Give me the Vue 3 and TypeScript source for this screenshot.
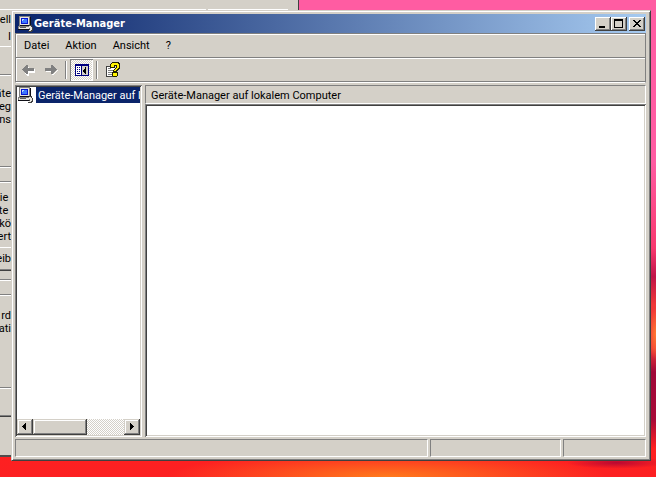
<script setup lang="ts">
import { ref } from 'vue'

interface Fragment {
  kind: 'text' | 'groove' | 'light' | 'dark'
  gap: number
  text?: string
}

const menus: string[] = ['Datei', 'Aktion', 'Ansicht', '?']
const treeVisible = ref(true)

const fragments: Fragment[] = [
  { kind: 'text', gap: 3, text: 'tell' },
  { kind: 'text', gap: 4, text: 'I' },
  { kind: 'light', gap: 3 },
  { kind: 'groove', gap: 27 },
  { kind: 'text', gap: 11, text: 'äte' },
  { kind: 'text', gap: 0, text: 'reg' },
  { kind: 'text', gap: 0, text: 'ns' },
  { kind: 'groove', gap: 40 },
  { kind: 'groove', gap: 13 },
  { kind: 'text', gap: 8, text: 'ie ' },
  { kind: 'text', gap: 0, text: 'te ' },
  { kind: 'text', gap: 0, text: 'kö' },
  { kind: 'text', gap: 0, text: 'ert' },
  { kind: 'light', gap: 4 },
  { kind: 'text', gap: 4, text: 'eib' },
  { kind: 'dark', gap: 4 },
  { kind: 'groove', gap: 8 },
  { kind: 'groove', gap: 13 },
  { kind: 'text', gap: 13, text: 'rd' },
  { kind: 'text', gap: 0, text: 'ati' },
  { kind: 'groove', gap: 52 },
  { kind: 'dark', gap: 26 },
]
</script>

<template>
  <div class="desktop">
    <section class="dialog">
      <div class="tabs"><span></span><span></span></div>
      <div class="edge">
        <div
          v-for="(item, i) in fragments"
          :key="i"
          :class="item.kind"
          :style="{ marginTop: item.gap + 'px' }"
        >{{ item.text }}</div>
      </div>
    </section>

    <main class="window">
      <header class="titlebar">
        <svg class="pc" viewBox="0 0 16 16" shape-rendering="crispEdges" aria-hidden="true">
          <g id="pc-shape">
            <path fill="#808080" d="M2 0h11v10H2zM1 10h12v4H1z" />
            <path fill="#e8e6e0" d="M3 1h9v8H3zM2 11h10v2H2z" />
            <path fill="#0818d0" d="M4 2h7v6H4z" />
            <path fill="#3c78ff" d="M5 3h5v4H5z" />
            <path fill="#b8d8ff" d="M5 3h2v1H5zM5 4h1v1H5z" />
            <path fill="#101018" d="M13 1h1v9h-1zM3 9h10v1H3zM1 13h12v1H1z" />
            <path fill="#606060" d="M3 11h6v1H3z" />
            <path fill="#404040" d="M12 9h3v2h1v4h-1v1h-4v-1h1v-2h1v-2h-1z" />
            <path fill="#e8e6e0" d="M12 10h2v1h1v3h-1v1h-2v-1h1v-2h-1z" />
          </g>
        </svg>
        <h1>Geräte-Manager</h1>
        <div class="captions">
          <button type="button" aria-label="Minimieren">
            <svg viewBox="0 0 12 10" shape-rendering="crispEdges"><path d="M2 7h6v2H2z" /></svg>
          </button>
          <button type="button" aria-label="Maximieren">
            <svg viewBox="0 0 12 10" shape-rendering="crispEdges"><path fill-rule="evenodd" d="M1 0h9v9H1zM2 2v6h7V2z" /></svg>
          </button>
          <button type="button" class="close" aria-label="Schließen">
            <svg viewBox="0 0 12 10" shape-rendering="crispEdges"><path d="M2 1h2v1h1v1h2V2h1V1h2v1H9v1H8v1H7v1h1v1h1v1h1v1H8V7H7V6H5v1H4v1H2V7h1V6h1V5h1V4H4V3H3V2H2z" /></svg>
          </button>
        </div>
      </header>

      <div class="bars">
        <nav class="menubar">
          <button v-for="m in menus" :key="m" type="button">{{ m }}</button>
        </nav>
        <div class="toolbar">
          <button type="button" class="tool" disabled aria-label="Zurück">
            <svg viewBox="0 0 16 16" shape-rendering="crispEdges">
              <path fill="#fff" d="M7 5h2v2h6v4H9v3H7v-1H6v-1H5v-1h3V7H7z" />
              <path fill="#808080" d="M2 7h1V6h1V5h1V4h1V3h2v3h6v3H8v3H6v-1H5v-1H4V9H3V8H2z" />
            </svg>
          </button>
          <button type="button" class="tool" disabled aria-label="Vorwärts">
            <svg viewBox="0 0 16 16" shape-rendering="crispEdges">
              <path fill="#fff" d="M3 9h6v3h2v-1h1v-1h1V9h1V8h1v1h-1v1h-1v1h-1v1h-1v1H9v-3H3z" />
              <path fill="#808080" d="M14 7h-1V6h-1V5h-1V4h-1V3H8v3H2v3h6v3h2v-1h1v-1h1V9h1V8h1z" />
            </svg>
          </button>
          <span class="divider"></span>
          <button
            type="button"
            class="tool"
            :class="{ pressed: treeVisible }"
            :aria-pressed="treeVisible"
            aria-label="Konsolenstruktur ein-/ausblenden"
            @click="treeVisible = !treeVisible"
          >
            <svg viewBox="0 0 16 16" shape-rendering="crispEdges">
              <path fill="#000080" d="M1 2h14v12H1z" />
              <path fill="#fff" d="M2 4h5v9H2z" />
              <path fill="#d4d0c8" d="M8 4h6v9H8z" />
              <path fill="#000080" d="M3 5h1v1H3zM5 5h1v1H5zM3 7h1v1H3zM5 7h1v1H5zM3 9h1v1H3zM5 9h1v1H5zM3 11h3v1H3z" />
              <path fill="#000" d="M12 5v7h-1v-1h-1v-1H9V8h1V7h1V5z" />
            </svg>
          </button>
          <span class="divider"></span>
          <button type="button" class="tool help" aria-label="Hilfe">
            <svg viewBox="0 0 16 16" shape-rendering="crispEdges">
              <path fill="#404040" d="M1 4h9v11H1z" />
              <path fill="#fff" d="M2 5h8v9H2z" />
              <path fill="#808080" d="M3 6h3v1H3zM3 8h5v1H3zM3 10h4v1H3zM3 12h4v1H3z" />
              <path fill="#202000" d="M6 1h1V0h7v1h1v6h-1v1h-1v1h-1v1h1v4h-1v1H8v-1H7v-4h1V8h1V7h1V6h1V4h-1v2H5V2h1z" />
              <path fill="#fff200" d="M7 2V1h6v1h1v4h-1v1h-1v1h-1v1H9V8h1V7h1V6h1V3H9v2H6V2zM8 11h4v3H8z" />
            </svg>
          </button>
        </div>
      </div>

      <div class="content" :class="{ single: !treeVisible }">
        <aside v-if="treeVisible" class="tree">
          <ul>
            <li>
              <svg class="pc" viewBox="0 0 16 16" shape-rendering="crispEdges" aria-hidden="true">
                <use href="#pc-shape" />
              </svg>
              <a href="#">Geräte-Manager auf lokalem Computer</a>
            </li>
          </ul>
          <div class="scrollbar">
            <button type="button" aria-label="Nach links">
              <svg viewBox="0 0 8 8" shape-rendering="crispEdges"><path d="M5 0v7H4V6H3V5H2V4H1V3h1V2h1V1h1V0z" /></svg>
            </button>
            <div class="track"><div class="thumb"></div></div>
            <button type="button" aria-label="Nach rechts">
              <svg viewBox="0 0 8 8" shape-rendering="crispEdges"><path d="M2 0v7h1V6h1V5h1V4h1V3H5V2H4V1H3V0z" /></svg>
            </button>
          </div>
        </aside>
        <section class="details">
          <h2>Geräte-Manager auf lokalem Computer</h2>
          <div class="pane"></div>
        </section>
      </div>

      <footer class="status"><span></span><span></span><span></span></footer>
    </main>
  </div>
</template>

<style>
html,
body,
#app {
  height: 100%;
  margin: 0;
}
</style>

<style scoped>
* {
  box-sizing: border-box;
}

.desktop {
  position: relative;
  height: 100%;
  overflow: hidden;
  font: 11px/13px Roboto, "Liberation Sans", sans-serif;
  color: #000;
  background:
    radial-gradient(ellipse 50px 6px at 94% 97%, #b80832, transparent),
    radial-gradient(ellipse 8px 26px at 100% 70%, #ff7a30, transparent),
    radial-gradient(ellipse 220px 26px at 59% 100%, #ff7a1c, transparent),
    linear-gradient(#ff5ca2 0 34%, #f8386e 52%, #c01448 58%, #f03838 64%, #f03838 73%, #a00838 78%, #a80a38 88%, #ff2020 94%, #fc2022);
}

button {
  margin: 0;
  padding: 0;
  border: 0;
  font: inherit;
  color: inherit;
  background: none;
}

svg {
  display: block;
}

.dialog {
  position: absolute;
  inset: 0 auto 20px 0;
  width: 299px;
  overflow: hidden;
  background: #d4d0c8;
  border-right: 1px solid #404040;
  border-bottom: 2px solid #504c4c;
}

.tabs {
  display: flex;
  gap: 2px;
  height: 10px;
  padding-right: 10px;
}

.tabs span {
  flex: 1;
  border-bottom: 1px solid #fff;
}

.tabs span:first-child {
  flex: 0 0 206px;
}

.edge {
  width: 11px;
}

.edge .text {
  display: flex;
  justify-content: flex-end;
  height: 13px;
  white-space: pre;
}

.groove {
  height: 2px;
  background: linear-gradient(#808080 50%, #fff 50%);
}

.light {
  height: 1px;
  background: #fff;
}

.dark {
  height: 2px;
  background: linear-gradient(#808080 50%, #404040 50%);
}

.window {
  position: absolute;
  inset: 10px 5px 16px 11px;
  display: flex;
  flex-direction: column;
  padding: 2px 3px 2px 2px;
  background: #d4d0c8;
  border: 1px solid;
  border-color: #d4d0c8 #404040 #404040 #d4d0c8;
  box-shadow: inset 1px 1px #fff, inset -1px -1px #808080;
}

.titlebar {
  display: flex;
  align-items: center;
  flex: none;
  height: 19px;
  margin: 1px 1px 0;
  padding: 0 1px 0 2px;
  color: #fff;
  background: linear-gradient(90deg, #0a246a, #a6caf0);
}

.pc {
  flex: none;
  width: 16px;
  height: 16px;
}

h1 {
  flex: 1;
  margin: 0;
  padding-left: 1px;
  font-family: "DejaVu Sans Condensed", "DejaVu Sans", sans-serif;
  font-size: 11px;
  font-weight: bold;
}

.captions {
  display: flex;
}

.captions button {
  width: 16px;
  height: 14px;
  padding: 2px;
  background: #d4d0c8;
  box-shadow: inset -1px -1px #404040, inset 1px 1px #fff, inset -2px -2px #808080;
}

.captions svg {
  width: 12px;
  height: 10px;
}

.captions .close {
  margin-left: 2px;
}

.bars {
  flex: none;
  margin: 0 1px;
  border: 1px solid #808080;
  border-bottom-color: #fff;
  box-shadow: inset 1px 1px #fff;
}

.menubar {
  display: flex;
  gap: 16px;
  height: 24px;
  padding: 0 8px;
  border-bottom: 1px solid #808080;
}

.toolbar {
  display: flex;
  align-items: center;
  height: 24px;
  border-top: 1px solid #fff;
  border-bottom: 1px solid #808080;
}

.tool {
  display: grid;
  place-items: center;
  width: 23px;
  height: 22px;
}

.tool svg {
  width: 16px;
  height: 16px;
}

.divider {
  width: 2px;
  height: 18px;
  margin: 0 3px;
  background: linear-gradient(90deg, #808080 50%, #fff 50%);
}

.pressed {
  background: repeating-conic-gradient(#fff 0 25%, #d4d0c8 0 50%) 0 0 / 2px 2px;
  box-shadow: inset 1px 1px #808080, inset -1px -1px #fff;
}

.content {
  display: grid;
  grid-template-columns: 127px minmax(0, 1fr);
  gap: 3px;
  flex: 1;
  min-height: 0;
  margin: 2px 1px 0;
}

.content.single {
  grid-template-columns: minmax(0, 1fr);
}

.tree {
  display: flex;
  flex-direction: column;
  min-width: 0;
  padding: 2px;
  background: #fff;
  box-shadow: inset 1px 1px #808080, inset -1px -1px #fff, inset 2px 2px #404040, inset -2px -2px #d4d0c8;
}

.tree ul {
  flex: 1;
  margin: 0;
  padding: 0;
  list-style: none;
}

.tree li {
  display: flex;
  gap: 3px;
}

.tree a {
  flex: 1;
  height: 16px;
  padding: 2px 2px 1px;
  overflow: hidden;
  color: #fff;
  white-space: nowrap;
  text-decoration: none;
  background: #0a246a;
}

.scrollbar {
  display: flex;
  height: 16px;
}

.scrollbar button,
.thumb {
  background: #d4d0c8;
  box-shadow: inset -1px -1px #404040, inset 1px 1px #d4d0c8, inset -2px -2px #808080, inset 2px 2px #fff;
}

.scrollbar button {
  display: grid;
  place-items: center;
  width: 16px;
  height: 16px;
}

.scrollbar button svg {
  width: 8px;
  height: 8px;
}

.track {
  flex: 1;
  background: repeating-conic-gradient(#fff 0 25%, #d4d0c8 0 50%) 0 0 / 2px 2px;
}

.thumb {
  width: 59%;
  height: 16px;
}

.details {
  display: flex;
  flex-direction: column;
  min-width: 0;
}

h2 {
  flex: none;
  height: 19px;
  margin: 0;
  padding: 3px 5px 0;
  overflow: hidden;
  font-size: 11px;
  font-weight: normal;
  line-height: 13px;
  white-space: nowrap;
  border: 1px solid;
  border-color: #808080 #fff #fff #808080;
}

.pane {
  flex: 1;
  background: #fff;
  box-shadow: inset 1px 1px #808080, inset -1px -1px #fff, inset 2px 2px #404040, inset -2px -2px #d4d0c8;
}

.status {
  display: grid;
  grid-template-columns: minmax(0, 1fr) 131px 83px;
  gap: 2px;
  flex: none;
  height: 18px;
  margin: 2px 1px 1px;
}

.status span {
  border: 1px solid;
  border-color: #808080 #fff #fff #808080;
}
</style>
